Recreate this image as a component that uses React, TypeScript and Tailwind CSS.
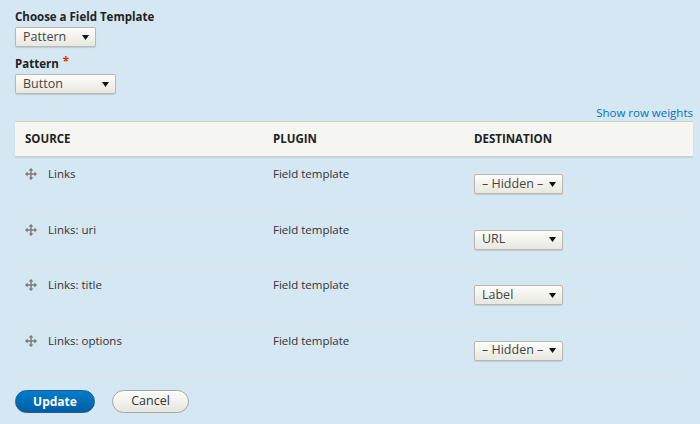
import React from "react";

const FONT = { fontFamily: '"Open Sans", "DejaVu Sans", sans-serif' };

function Caret() {
  return (
    <svg width="7" height="5" viewBox="0 0 7 5" className="shrink-0">
      <path d="M0 0 L7 0 L3.5 5 Z" fill="#111" />
    </svg>
  );
}

function FakeSelect({ value, width }: { value: string; width: string }) {
  return (
    <div
      className={`${width} flex h-[20px] items-center justify-between rounded-[2px] border border-[#b9b9b4] bg-gradient-to-b from-[#fdfdfb] to-[#e8e8e0] pl-[7px] pr-[6px] text-[12.5px] leading-none text-[#444] shadow-[0_1px_1px_rgba(0,0,0,0.12)]`}
    >
      <span>{value}</span>
      <Caret />
    </div>
  );
}

function DragHandle() {
  return (
    <svg width="12" height="12" viewBox="0 0 12 12" className="shrink-0">
      <g fill="#777">
        <rect x="5.3" y="2" width="1.4" height="8" />
        <rect x="2" y="5.3" width="8" height="1.4" />
        <path d="M6 0 L8.4 2.6 L3.6 2.6 Z" />
        <path d="M6 12 L8.4 9.4 L3.6 9.4 Z" />
        <path d="M0 6 L2.6 3.6 L2.6 8.4 Z" />
        <path d="M12 6 L9.4 3.6 L9.4 8.4 Z" />
      </g>
    </svg>
  );
}

const rows = [
  { source: "Links", plugin: "Field template", dest: "– Hidden –" },
  { source: "Links: uri", plugin: "Field template", dest: "URL" },
  { source: "Links: title", plugin: "Field template", dest: "Label" },
  { source: "Links: options", plugin: "Field template", dest: "– Hidden –" },
];

export default function App() {
  return (
    <div
      className="min-h-screen bg-[#d4e7f2] pl-[15px] pr-[7px] pt-[9px] text-[11.5px] text-[#333]"
      style={FONT}
    >
      <div className="leading-[16px] font-bold text-[#222]">Choose a Field Template</div>
      <div className="mt-[2px]">
        <FakeSelect value="Pattern" width="w-[81px]" />
      </div>

      <div className="mt-[9px] leading-[16px] font-bold text-[#222]">
        Pattern <span className="relative top-[-2px] ml-[1px] text-[#e32700]">*</span>
      </div>
      <div className="mt-[2px]">
        <FakeSelect value="Button" width="w-[101px]" />
      </div>

      <div className="mt-[11px] text-right leading-[16px]">
        <a className="text-[#0074bd]">Show row weights</a>
      </div>

      <div className="grid grid-cols-[248px_201px_1fr] border-y border-[#cfcfca] bg-[#f5f5f2] shadow-[0_1px_1px_rgba(0,0,0,0.08)]">
        {["SOURCE", "PLUGIN", "DESTINATION"].map((h) => (
          <div key={h} className="px-[10px] py-[9px] leading-[16px] font-bold text-[#222]">
            {h}
          </div>
        ))}
      </div>

      {rows.map((r) => (
        <div
          key={r.source}
          className="grid h-[55.5px] grid-cols-[248px_201px_1fr] border-b border-[#dfe4e6]"
        >
          <div className="flex items-start gap-[11px] px-[10px] pt-[9px] leading-[16px]">
            <span className="pt-[2px]">
              <DragHandle />
            </span>
            <span>{r.source}</span>
          </div>
          <div className="px-[10px] pt-[9px] leading-[16px]">{r.plugin}</div>
          <div className="px-[10px] pt-[17px]">
            <FakeSelect value={r.dest} width="w-[89px]" />
          </div>
        </div>
      ))}

      <div className="mt-[11px] flex gap-[17px]">
        <button className="h-[23px] w-[80px] rounded-full border border-[#1e5d91] bg-gradient-to-b from-[#007ecb] to-[#005da4] text-[12px] font-bold leading-none text-white">
          Update
        </button>
        <button className="h-[23px] w-[77px] rounded-full border border-[#a6a6a1] bg-gradient-to-b from-[#fdfdfb] to-[#e6e6e0] text-[12.5px] leading-none text-[#333]">
          Cancel
        </button>
      </div>
    </div>
  );
}
